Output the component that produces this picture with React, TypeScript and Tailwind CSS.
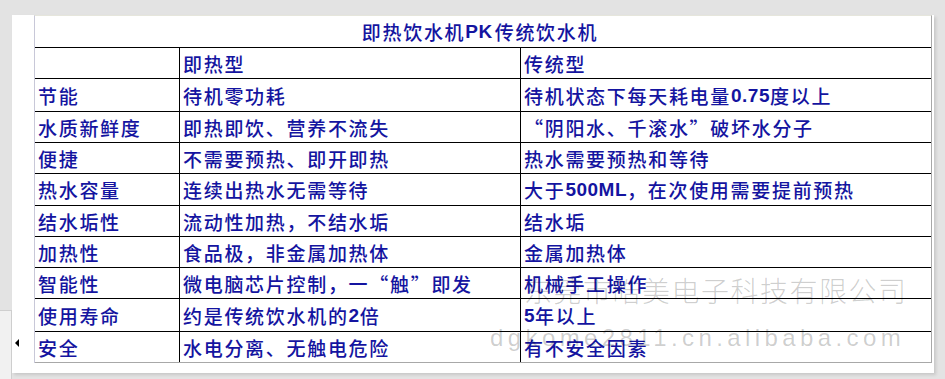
import React from 'react';

const rows: [string, string, string, number][] = [
  ['节能', '待机零功耗', '待机状态下每天耗电量{0.75}度以上', 33],
  ['水质新鲜度', '即热即饮、营养不流失', '“阴阳水、千滚水”破坏水分子', 31],
  ['便捷', '不需要预热、即开即热', '热水需要预热和等待', 31],
  ['热水容量', '连续出热水无需等待', '大于{500ML}，在次使用需要提前预热', 32],
  ['结水垢性', '流动性加热，不结水垢', '结水垢', 31],
  ['加热性', '食品极，非金属加热体', '金属加热体', 31],
  ['智能性', '微电脑芯片控制，一“触”即发', '机械手工操作', 31],
  ['使用寿命', '约是传统饮水机的{2}倍', '{5}年以上', 33],
  ['安全', '水电分离、无触电危险', '有不安全因素', 31],
];

// parts in {braces} are latin digits set bold
const Rich: React.FC<{ text: string }> = ({ text }) => (
  <>
    {text.split(/(\{[^}]+\})/).map((part, i) =>
      part.startsWith('{') ? (
        <b key={i} className="font-['Liberation_Sans'] font-bold tracking-[0.5px]">
          {part.slice(1, -1)}
        </b>
      ) : (
        <span key={i}>{part}</span>
      )
    )}
  </>
);

const Row: React.FC<{ cells: string[]; h: number }> = ({ cells, h }) => (
  <div className="flex border-b border-black" style={{ height: h }}>
    <div className="w-[144px] flex items-center pl-[3px]">
      <Rich text={cells[0]} />
    </div>
    <div className="w-[341px] flex items-center pl-[3px] border-l border-black">
      <Rich text={cells[1]} />
    </div>
    <div className="flex-1 flex items-center pl-[3px] border-l border-black">
      <Rich text={cells[2]} />
    </div>
  </div>
);

const App: React.FC = () => {
  return (
    <div className="w-[945px] h-[379px] bg-[#e3e3e3] flex overflow-hidden relative">
      <div className="w-[12px] flex flex-col pt-[310px]">
        <div className="flex-1 bg-[#f1f1f1] border-t border-r border-[#cfcfcf]"></div>
      </div>

      <div className="mt-[15px] w-[922px] h-[358px] bg-white pl-[22px] shadow-[2px_2px_3px_rgba(0,0,0,0.12)] relative">
        <div className="absolute left-[3px] top-[324px] w-0 h-0 border-y-[4px] border-y-transparent border-r-[4px] border-r-black"></div>

        <div className="w-[898px] border-t border-t-[#e6e6dc] border-l border-l-[#c8c8d8] border-r border-r-[#a8a8a8] font-['Noto_Sans_CJK_SC',sans-serif] font-medium text-[19px] leading-none tracking-[1.7px] text-[#1414a0]">
          <div className="h-[32px] flex items-center justify-center border-b border-black pr-[6px]">
            <Rich text="即热饮水机" />
            <b className="font-['Liberation_Sans'] font-bold tracking-[0.5px] mr-[2px]">PK</b>
            <Rich text="传统饮水机" />
          </div>
          <Row cells={['', '即热型', '传统型']} h={31} />
          {rows.map((r) => (
            <Row key={r[0]} cells={[r[0], r[1], r[2]]} h={r[3]} />
          ))}
          <div className="h-0 border-b border-[#a8a8a8] -mt-px"></div>
        </div>

        {/* watermark */}
        <div className="absolute left-[512px] top-[261px] font-['Noto_Sans_CJK_SC',sans-serif] font-light text-[28px] leading-none tracking-[1.5px] text-black/20 whitespace-nowrap pointer-events-none">
          东莞市皓美电子科技有限公司
        </div>
        <div className="absolute left-[478px] top-[311px] font-['Liberation_Sans',sans-serif] text-[24px] leading-none tracking-[4.4px] text-black/20 whitespace-nowrap pointer-events-none">
          dgkome2811.cn.alibaba.com
        </div>
      </div>
    </div>
  );
};

export default App;
